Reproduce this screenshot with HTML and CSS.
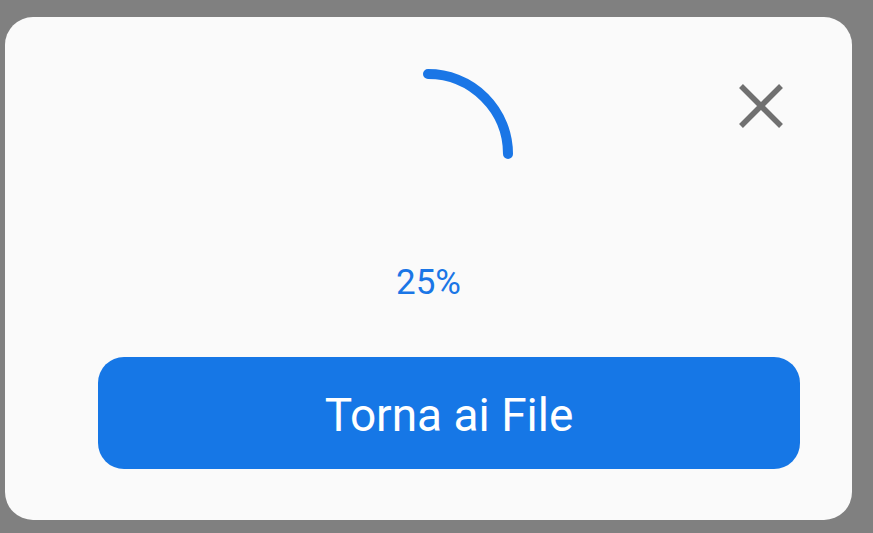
FILE: index.html
```html
<!DOCTYPE html>
<html lang="it">
<head>
<meta charset="utf-8">
<title>Caricamento</title>
<link rel="stylesheet" href="styles.css">
</head>
<body>
<div class="card">
  <button class="close" aria-label="Chiudi">
    <svg width="46" height="46" viewBox="0 0 46 46"><path d="M3 3 L43 43 M43 3 L3 43" stroke="#707070" stroke-width="5.5" fill="none"/></svg>
  </button>
  <div class="spinner">
    <svg width="180" height="180" viewBox="0 0 180 180"><path d="M89 10 A80 80 0 0 1 169 90" stroke="#1a76e6" stroke-width="10" stroke-linecap="round" fill="none"/></svg>
  </div>
  <div class="percent">25%</div>
  <button class="back">Torna ai File</button>
</div>
</body>
</html>
```
FILE: styles.css
```css
html, body {
  margin: 0;
  padding: 0;
  background: #808080;
  font-family: Roboto, "Noto Sans", sans-serif;
}
body {
  width: 873px;
  height: 533px;
  overflow: hidden;
}
.card {
  position: relative;
  box-sizing: border-box;
  margin: 17px 0 0 5px;
  width: 847px;
  height: 503px;
  background: #fafafa;
  border-radius: 28px;
  display: flex;
  flex-direction: column;
  align-items: center;
  padding-top: 47px;
}
.close {
  position: absolute;
  top: 66px;
  right: 68px;
  width: 46px;
  height: 46px;
  padding: 0;
  border: 0;
  background: none;
}
.close svg { display: block; }
.spinner svg { display: block; }
.spinner {
  width: 180px;
  height: 180px;
}
.percent {
  margin-top: 19px;
  font-size: 35px;
  line-height: 40px;
  color: #1a76e6;
}
.back {
  align-self: flex-start;
  box-sizing: border-box;
  margin: 54px 0 0 93px;
  width: 702px;
  height: 112px;
  border: 0;
  border-radius: 26px;
  background: #1677e6;
  color: #ffffff;
  font-family: Roboto, "Noto Sans", sans-serif;
  font-size: 46px;
  line-height: 108px;
  padding: 4px 0 0 0;
}
```
